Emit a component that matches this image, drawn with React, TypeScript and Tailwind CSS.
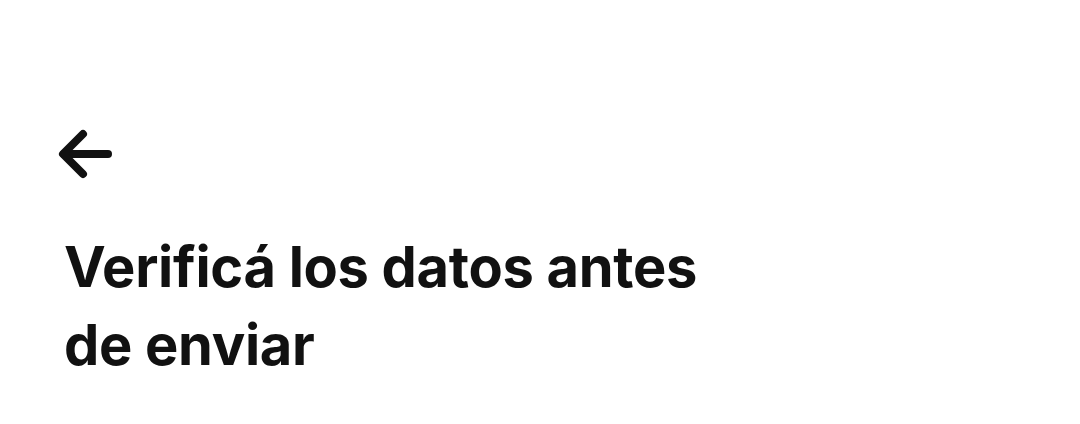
export default function App() {
  return (
    <div className="w-[1080px] h-[424px] bg-white flex flex-col" style={{ fontFamily: "Inter, 'Noto Sans', sans-serif" }}>
      <div className="pt-[128px] pl-[57px]">
        <svg width="58" height="52" viewBox="0 0 58 52" fill="none" stroke="#111111" strokeWidth="8" strokeLinecap="round" strokeLinejoin="round">
          <path d="M51 26H7" />
          <path d="M26 6L6 26L26 46" />
        </svg>
      </div>
      <h1 className="mt-[48px] pl-[64px] text-[56px] leading-[78px] font-bold text-[#111111] tracking-[-0.3px] w-[740px]">
        Verificá los datos antes de enviar
      </h1>
    </div>
  );
}
